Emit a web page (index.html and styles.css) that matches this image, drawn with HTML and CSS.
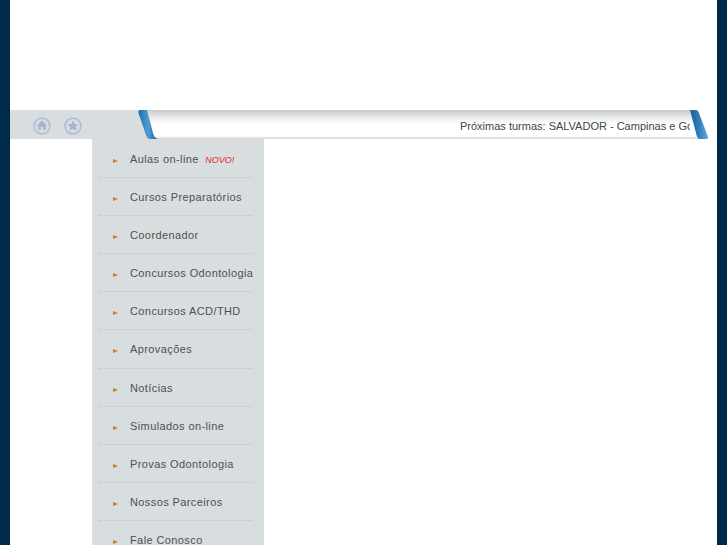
FILE: index.html
```html
<!DOCTYPE html>
<html lang="pt-BR">
<head>
    <meta charset="UTF-8">
    <title>Aulas on-line</title>
    <link rel="stylesheet" href="styles.css">
</head>
<body>
    <div class="page">
        <header class="top"></header>
        <div class="bar">
            <div class="icons">
                <a href="#" class="icon">
                    <svg width="18" height="18" viewBox="0 0 18 18">
                        <circle cx="9" cy="9" r="7.9" fill="none" stroke="#b3bbd6" stroke-width="1.6"/>
                        <path d="M9 3.6 L14 8.4 L12.7 8.4 L12.7 13 L10.2 13 L10.2 10 L7.8 10 L7.8 13 L5.3 13 L5.3 8.4 L4 8.4 Z" fill="#aab2d0"/>
                    </svg>
                </a>
                <a href="#" class="icon">
                    <svg width="18" height="18" viewBox="0 0 18 18">
                        <circle cx="9" cy="9" r="7.9" fill="none" stroke="#b3bbd6" stroke-width="1.6"/>
                        <path d="M9 3.2 L10.6 7 L14.6 7.3 L11.5 9.9 L12.5 13.8 L9 11.7 L5.5 13.8 L6.5 9.9 L3.4 7.3 L7.4 7 Z" fill="#aab2d0"/>
                    </svg>
                </a>
            </div>
            <svg class="cap cap-left" width="22" height="29" viewBox="0 0 22 29">
                <defs>
                    <linearGradient id="tabL" x1="0" y1="0" x2="0" y2="1">
                        <stop offset="0" stop-color="#c8cacb"/>
                        <stop offset="0.3" stop-color="#eeefef"/>
                        <stop offset="0.5" stop-color="#fff"/>
                        <stop offset="0.9" stop-color="#fff"/>
                        <stop offset="1" stop-color="#cfd2d3"/>
                    </linearGradient>
                    <linearGradient id="blueL" x1="0" y1="0" x2="1" y2="0">
                        <stop offset="0" stop-color="#1f6fb0"/>
                        <stop offset="0.5" stop-color="#4f9ad2"/>
                        <stop offset="1" stop-color="#1d5f9c"/>
                    </linearGradient>
                </defs>
                <path d="M9 0 H22 V29 H20 Q16 29 15 26 Z" fill="url(#tabL)"/>
                <path d="M2 0 H9 L15 23 Q16 28 20 29 H12 Q9 29 8 25 L0.5 3 Q0 0 2 0 Z" fill="url(#blueL)"/>
            </svg>
            <div class="tab">
                <p class="ticker">Próximas turmas: SALVADOR - Campinas e Goiânia</p>
            </div>
            <svg class="cap cap-right" width="19" height="29" viewBox="0 0 19 29">
                <defs>
                    <linearGradient id="blueR" x1="0" y1="0" x2="1" y2="0">
                        <stop offset="0" stop-color="#1d5f9c"/>
                        <stop offset="0.5" stop-color="#2f7dbd"/>
                        <stop offset="1" stop-color="#6aa9d8"/>
                    </linearGradient>
                </defs>
                <path d="M0 0 H1 L6 23 Q7 28 9 29 H0 Z" fill="url(#tabL)"/>
                <path d="M0 0 H6 Q8 0 9 3 L18 27 Q18.500 29 16 29 H9 Q7 28 6 23 Z" fill="url(#blueR)"/>
            </svg>
        </div>
        <nav class="menu">
            <ul>
                <li><a href="#">Aulas on-line</a> <em class="novo">NOVO!</em></li>
                <li><a href="#">Cursos Preparatórios</a></li>
                <li><a href="#">Coordenador</a></li>
                <li><a href="#">Concursos Odontologia</a></li>
                <li><a href="#">Concursos ACD/THD</a></li>
                <li><a href="#">Aprovações</a></li>
                <li><a href="#">Notícias</a></li>
                <li><a href="#">Simulados on-line</a></li>
                <li><a href="#">Provas Odontologia</a></li>
                <li><a href="#">Nossos Parceiros</a></li>
                <li><a href="#">Fale Conosco</a></li>
            </ul>
        </nav>
    </div>
</body>
</html>
```

FILE: styles.css
```css
html, body {
    margin: 0;
    padding: 0;
    height: 100%;
    overflow: hidden;
}
body {
    background-color: #002a4a;
    font-family: "Liberation Sans", Arial, sans-serif;
    color: #444;
}
.page {
    margin: 0 10px;
    height: 100%;
    background-color: #fff;
}
.top {
    height: 110px;
}
.bar {
    display: flex;
    height: 29px;
}
.icons {
    display: flex;
    gap: 13px;
    width: 128px;
    height: 29px;
    padding: 7px 0 0 23px;
    box-sizing: border-box;
    background-color: #d8dde0;
}
.icon {
    display: block;
    height: 18px;
}
.cap {
    display: block;
    flex: none;
}
.cap-left {
    background-color: #d8dde0;
}
.cap-right {
    margin-right: 8px;
}
.tab {
    flex: 1;
    height: 29px;
    overflow: hidden;
    background: linear-gradient(#c8cacb 0, #eeefef 30%, #fff 50%, #fff 90%, #cfd2d3 100%);
}
.ticker {
    margin: 0;
    padding-left: 300px;
    font-size: 11px;
    line-height: 32px;
    white-space: nowrap;
}
.menu {
    width: 172px;
    margin-left: 82px;
    height: 420px;
    box-sizing: border-box;
    padding: 1px 11px 0 7px;
    background-color: #d8dde0;
}
.menu ul {
    list-style: none;
    margin: 0;
    padding: 0;
}
.menu li {
    position: relative;
    height: 37.1px;
    padding-left: 31px;
    border-bottom: 1px dotted #bfc4c7;
    font-size: 11px;
    line-height: 38px;
    letter-spacing: 0.4px;
    white-space: nowrap;
}
.menu li:before {
    content: "";
    position: absolute;
    left: 14px;
    top: 19px;
    border-left: 5px solid #c9821d;
    border-top: 2.5px solid transparent;
    border-bottom: 2.5px solid transparent;
}
.menu li a {
    color: #505050;
    text-decoration: none;
}
.novo {
    margin-left: 3px;
    font-size: 9px;
    letter-spacing: 0;
    color: #e8212b;
}
```
